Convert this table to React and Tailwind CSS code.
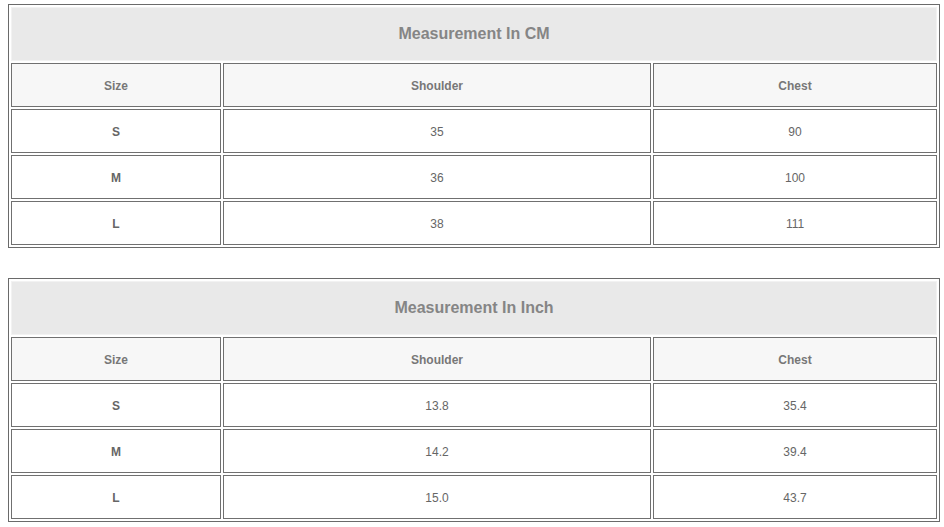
import React from 'react';

const tables = [
    {
        title: 'Measurement In CM',
        rows: [
            ['S', '35', '90'],
            ['M', '36', '100'],
            ['L', '38', '111'],
        ],
    },
    {
        title: 'Measurement In Inch',
        rows: [
            ['S', '13.8', '35.4'],
            ['M', '14.2', '39.4'],
            ['L', '15.0', '43.7'],
        ],
    },
];

function SizeTable({ title, rows }) {
    return (
        <div className="grid w-[932px] grid-cols-[210px_428px_284px] gap-[2px] border border-[#6a6a6a] bg-white p-[2px]">
            <div className="col-span-3 flex h-[54px] items-center justify-center border border-[#f2f2f2] bg-[#e9e9e9] text-[16px] font-bold text-[#858585]">
                {title}
            </div>

            {['Size', 'Shoulder', 'Chest'].map((h) => (
                <div
                    key={h}
                    className="flex h-[44px] items-center justify-center border border-[#707070] bg-[#f7f7f7] pt-[2px] text-[12px] font-bold text-[#777]"
                >
                    {h}
                </div>
            ))}

            {rows.map((row) =>
                row.map((cell, i) => (
                    <div
                        key={row[0] + i}
                        className={`flex h-[44px] items-center justify-center border border-[#707070] bg-white pt-[2px] text-[12px] text-[#666] ${i === 0 ? 'font-bold' : ''}`}
                    >
                        {cell}
                    </div>
                ))
            )}
        </div>
    );
}

export default function App() {
    return (
        <div className="flex min-h-[527px] w-[944px] flex-col gap-[30px] bg-white pl-[8px] pt-[4px] font-['Liberation_Sans',Arial,sans-serif]">
            {tables.map((t) => (
                <SizeTable key={t.title} title={t.title} rows={t.rows} />
            ))}
        </div>
    );
}
